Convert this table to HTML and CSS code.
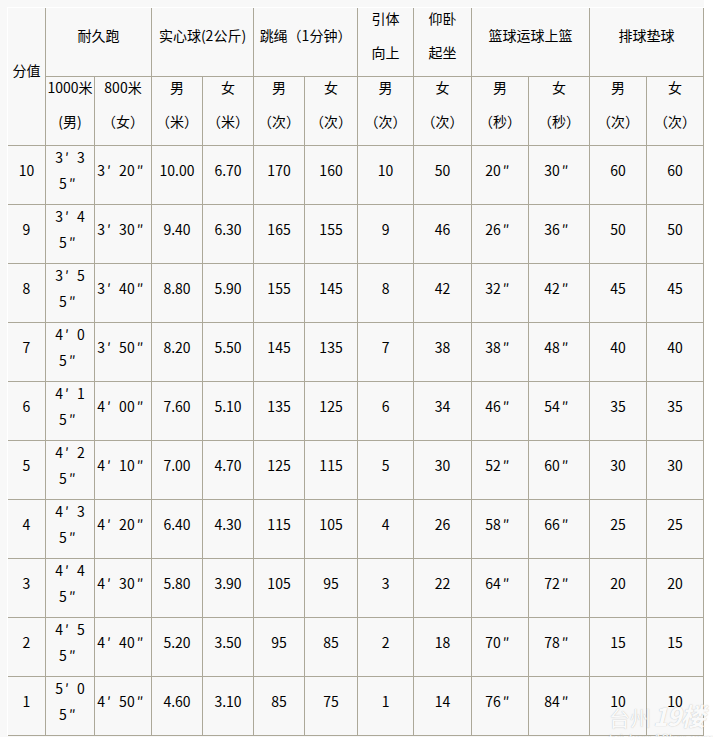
FILE: index.html
```html
<!DOCTYPE html>
<html lang="zh-CN">
<head>
<meta charset="utf-8">
<title>体育中考评分标准</title>
<link rel="stylesheet" href="styles.css">
</head>
<body>
<div class="screen">
<div class="page">
<table class="score">
<colgroup>
<col class="w38"><col class="w49"><col class="w57"><col class="w51"><col class="w51"><col class="w51"><col class="w53"><col class="w56"><col class="w58"><col class="w57"><col class="w61"><col class="w57"><col class="w57">
</colgroup>
<thead>
<tr class="hrow">
<th rowspan="2"><span class="t">分值</span></th>
<th colspan="2"><span class="t">耐久跑</span></th>
<th colspan="2"><span class="t">实心球(2公斤)</span></th>
<th colspan="2"><span class="t">跳绳（1分钟）</span></th>
<th><span class="t"><span class="ln">引体</span><span class="ln">向上</span></span></th>
<th><span class="t"><span class="ln">仰卧</span><span class="ln">起坐</span></span></th>
<th colspan="2"><span class="t">篮球运球上篮</span></th>
<th colspan="2"><span class="t">排球垫球</span></th>
</tr>
<tr class="hrow">
<th><span class="t"><span class="ln">1000米</span><span class="ln">(男)</span></span></th>
<th><span class="t"><span class="ln">800米</span><span class="ln">（女）</span></span></th>
<th><span class="t"><span class="ln">男</span><span class="ln">（米）</span></span></th>
<th><span class="t"><span class="ln">女</span><span class="ln">（米）</span></span></th>
<th><span class="t"><span class="ln">男</span><span class="ln">（次）</span></span></th>
<th><span class="t"><span class="ln">女</span><span class="ln">（次）</span></span></th>
<th><span class="t"><span class="ln">男</span><span class="ln">（次）</span></span></th>
<th><span class="t"><span class="ln">女</span><span class="ln">（次）</span></span></th>
<th><span class="t"><span class="ln">男</span><span class="ln">（秒）</span></span></th>
<th><span class="t"><span class="ln">女</span><span class="ln">（秒）</span></span></th>
<th><span class="t"><span class="ln">男</span><span class="ln">（次）</span></span></th>
<th><span class="t"><span class="ln">女</span><span class="ln">（次）</span></span></th>
</tr>
</thead>
<tbody>
<tr><td><span class="t">10</span></td><td><span class="t">3<span class="pm">′</span>3<br>5<span class="pm">″</span></span></td><td><span class="t">3<span class="pm">′</span>20<span class="pm">″</span></span></td><td><span class="t">10.00</span></td><td><span class="t">6.70</span></td><td><span class="t">170</span></td><td><span class="t">160</span></td><td><span class="t">10</span></td><td><span class="t">50</span></td><td><span class="t">20<span class="pm">″</span></span></td><td><span class="t">30<span class="pm">″</span></span></td><td><span class="t">60</span></td><td><span class="t">60</span></td></tr>
<tr><td><span class="t">9</span></td><td><span class="t">3<span class="pm">′</span>4<br>5<span class="pm">″</span></span></td><td><span class="t">3<span class="pm">′</span>30<span class="pm">″</span></span></td><td><span class="t">9.40</span></td><td><span class="t">6.30</span></td><td><span class="t">165</span></td><td><span class="t">155</span></td><td><span class="t">9</span></td><td><span class="t">46</span></td><td><span class="t">26<span class="pm">″</span></span></td><td><span class="t">36<span class="pm">″</span></span></td><td><span class="t">50</span></td><td><span class="t">50</span></td></tr>
<tr><td><span class="t">8</span></td><td><span class="t">3<span class="pm">′</span>5<br>5<span class="pm">″</span></span></td><td><span class="t">3<span class="pm">′</span>40<span class="pm">″</span></span></td><td><span class="t">8.80</span></td><td><span class="t">5.90</span></td><td><span class="t">155</span></td><td><span class="t">145</span></td><td><span class="t">8</span></td><td><span class="t">42</span></td><td><span class="t">32<span class="pm">″</span></span></td><td><span class="t">42<span class="pm">″</span></span></td><td><span class="t">45</span></td><td><span class="t">45</span></td></tr>
<tr><td><span class="t">7</span></td><td><span class="t">4<span class="pm">′</span>0<br>5<span class="pm">″</span></span></td><td><span class="t">3<span class="pm">′</span>50<span class="pm">″</span></span></td><td><span class="t">8.20</span></td><td><span class="t">5.50</span></td><td><span class="t">145</span></td><td><span class="t">135</span></td><td><span class="t">7</span></td><td><span class="t">38</span></td><td><span class="t">38<span class="pm">″</span></span></td><td><span class="t">48<span class="pm">″</span></span></td><td><span class="t">40</span></td><td><span class="t">40</span></td></tr>
<tr><td><span class="t">6</span></td><td><span class="t">4<span class="pm">′</span>1<br>5<span class="pm">″</span></span></td><td><span class="t">4<span class="pm">′</span>00<span class="pm">″</span></span></td><td><span class="t">7.60</span></td><td><span class="t">5.10</span></td><td><span class="t">135</span></td><td><span class="t">125</span></td><td><span class="t">6</span></td><td><span class="t">34</span></td><td><span class="t">46<span class="pm">″</span></span></td><td><span class="t">54<span class="pm">″</span></span></td><td><span class="t">35</span></td><td><span class="t">35</span></td></tr>
<tr><td><span class="t">5</span></td><td><span class="t">4<span class="pm">′</span>2<br>5<span class="pm">″</span></span></td><td><span class="t">4<span class="pm">′</span>10<span class="pm">″</span></span></td><td><span class="t">7.00</span></td><td><span class="t">4.70</span></td><td><span class="t">125</span></td><td><span class="t">115</span></td><td><span class="t">5</span></td><td><span class="t">30</span></td><td><span class="t">52<span class="pm">″</span></span></td><td><span class="t">60<span class="pm">″</span></span></td><td><span class="t">30</span></td><td><span class="t">30</span></td></tr>
<tr><td><span class="t">4</span></td><td><span class="t">4<span class="pm">′</span>3<br>5<span class="pm">″</span></span></td><td><span class="t">4<span class="pm">′</span>20<span class="pm">″</span></span></td><td><span class="t">6.40</span></td><td><span class="t">4.30</span></td><td><span class="t">115</span></td><td><span class="t">105</span></td><td><span class="t">4</span></td><td><span class="t">26</span></td><td><span class="t">58<span class="pm">″</span></span></td><td><span class="t">66<span class="pm">″</span></span></td><td><span class="t">25</span></td><td><span class="t">25</span></td></tr>
<tr><td><span class="t">3</span></td><td><span class="t">4<span class="pm">′</span>4<br>5<span class="pm">″</span></span></td><td><span class="t">4<span class="pm">′</span>30<span class="pm">″</span></span></td><td><span class="t">5.80</span></td><td><span class="t">3.90</span></td><td><span class="t">105</span></td><td><span class="t">95</span></td><td><span class="t">3</span></td><td><span class="t">22</span></td><td><span class="t">64<span class="pm">″</span></span></td><td><span class="t">72<span class="pm">″</span></span></td><td><span class="t">20</span></td><td><span class="t">20</span></td></tr>
<tr><td><span class="t">2</span></td><td><span class="t">4<span class="pm">′</span>5<br>5<span class="pm">″</span></span></td><td><span class="t">4<span class="pm">′</span>40<span class="pm">″</span></span></td><td><span class="t">5.20</span></td><td><span class="t">3.50</span></td><td><span class="t">95</span></td><td><span class="t">85</span></td><td><span class="t">2</span></td><td><span class="t">18</span></td><td><span class="t">70<span class="pm">″</span></span></td><td><span class="t">78<span class="pm">″</span></span></td><td><span class="t">15</span></td><td><span class="t">15</span></td></tr>
<tr><td><span class="t">1</span></td><td><span class="t">5<span class="pm">′</span>0<br>5<span class="pm">″</span></span></td><td><span class="t">4<span class="pm">′</span>50<span class="pm">″</span></span></td><td><span class="t">4.60</span></td><td><span class="t">3.10</span></td><td><span class="t">85</span></td><td><span class="t">75</span></td><td><span class="t">1</span></td><td><span class="t">14</span></td><td><span class="t">76<span class="pm">″</span></span></td><td><span class="t">84<span class="pm">″</span></span></td><td><span class="t">10</span></td><td><span class="t">10</span></td></tr>
</tbody>
</table>
</div>
<div class="watermark">
<div class="wm-main"><span class="wm-city">台州</span><span class="wm-brand">19楼</span></div>
<div class="wm-url">taizhou.19lou.com</div>
</div>
</div>
</body>
</html>
```
FILE: styles.css
```css
html, body {
  margin: 0;
  padding: 0;
  background: #ffffff;
}

.screen {
  position: relative;
  width: 713px;
  height: 737px;
  overflow: hidden;
}

.page {
  width: 704px;
  height: 737px;
  box-sizing: border-box;
  padding: 7px 0 0 7px;
  background: #f8f8f8;
  font-family: "Noto Sans CJK SC", "Noto Sans", sans-serif;
  font-size: 14px;
  color: #000000;
  text-spacing-trim: space-all;
}

.score {
  table-layout: fixed;
  width: 697px;
  border-collapse: separate;
  border-spacing: 0;
  border-top: 1px solid #ffffff;
  border-left: 1px solid #ffffff;
  background: #f8f8f8;
}

.w38 { width: 38px; }
.w49 { width: 49px; }
.w51 { width: 51px; }
.w53 { width: 53px; }
.w56 { width: 56px; }
.w57 { width: 57px; }
.w58 { width: 58px; }
.w61 { width: 61px; }

.score th,
.score td {
  box-sizing: border-box;
  padding: 0;
  border-right: 1px solid #aca899;
  border-bottom: 1px solid #aca899;
  text-align: center;
  vertical-align: middle;
  font-weight: normal;
  white-space: nowrap;
  overflow: visible;
}

.hrow {
  height: 69px;
}

.score tbody tr {
  height: 59px;
}

.score th .t {
  display: block;
  line-height: 34px;
  margin-top: -14px;
}

.ln {
  display: block;
  text-spacing-trim: space-all;
}

.score td .t {
  display: block;
  line-height: 26px;
  margin-top: -10px;
}

/* full-width prime marks, as in the original */
.pm {
  display: inline-block;
  width: 14px;
  text-align: left;
  padding-left: 2px;
  box-sizing: border-box;
}

.watermark {
  position: absolute;
  left: 609px;
  top: 700px;
  color: rgba(255, 255, 255, 0.94);
  text-shadow: 0 0 1px rgba(110, 110, 110, 0.5);
  white-space: nowrap;
  pointer-events: none;
  font-family: "Noto Sans CJK SC", sans-serif;
}

.wm-main {
  display: flex;
  align-items: baseline;
  gap: 2px;
  line-height: 30px;
}

.wm-city {
  font-size: 21px;
}

.wm-brand {
  font-size: 25px;
  font-weight: bold;
  font-style: italic;
  letter-spacing: -1px;
}

.wm-url {
  font-family: "Liberation Sans", sans-serif;
  font-size: 13px;
  line-height: 14px;
}
```
